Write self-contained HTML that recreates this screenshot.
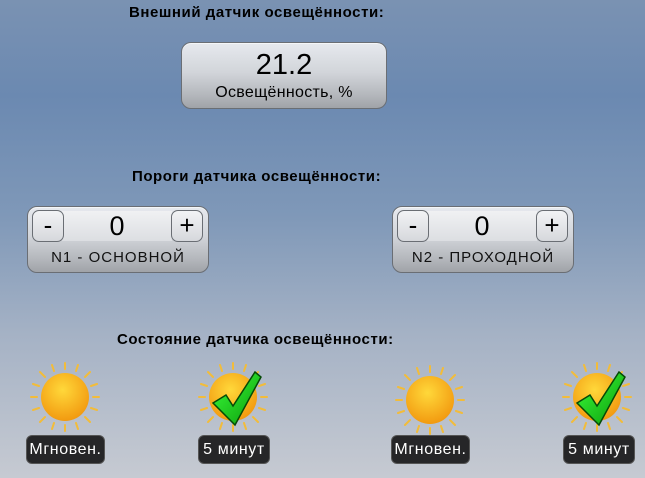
<!DOCTYPE html>
<html><head><meta charset="utf-8"><style>
*{margin:0;padding:0;box-sizing:border-box}
body{width:645px;height:478px;overflow:hidden;position:relative;font-family:"Liberation Sans",sans-serif;
background:linear-gradient(180deg,#7a92b2 0%,#6b89b1 20%,#7f98b8 45%,#a5b2c5 70%,#c6cad2 100%);}
.t{position:absolute;font-weight:bold;font-size:15px;letter-spacing:0.55px;color:#000;white-space:nowrap}
.box{position:absolute;border:1px solid #6a6e74;border-radius:10px;
background:linear-gradient(180deg,#e6e9ee 0%,#d2d5da 45%,#b4b7bc 80%,#a0a3a8 100%);box-shadow:inset 0 1px 0 #f4f6f8}
.big{position:absolute;left:0;right:0;text-align:center;white-space:nowrap}
.btn{position:absolute;top:3px;width:32px;height:32px;border:1px solid #6a6e74;border-radius:7px;
background:linear-gradient(180deg,#f2f3f5,#d6d8dc);font-size:26px;line-height:29px;text-align:center;color:#000}
.band{position:absolute;top:4px;height:30px;background:linear-gradient(180deg,#f0f1f3,#dcdee2);font-size:27px;line-height:31px;text-align:center}
.lab{position:absolute;bottom:6px;left:0;right:0;text-align:center;font-size:15px;color:#111;letter-spacing:1px;white-space:nowrap}
.pill{position:absolute;top:435px;height:29px;background:#262628;border:1px solid #555;border-radius:6px;color:#fff;font-size:16px;letter-spacing:.6px;line-height:27px;text-align:center;white-space:nowrap}
svg.s{position:absolute}
</style></head><body>
<div class="t" style="left:129px;top:4px">Внешний датчик освещённости:</div>
<div class="box" style="left:181px;top:42px;width:206px;height:67px">
 <div class="big" style="top:6px;font-size:29px">21.2</div>
 <div class="big" style="top:41px;font-size:16px;letter-spacing:.3px">Освещённость, %</div>
</div>
<div class="t" style="left:132px;top:168px">Пороги датчика освещённости:</div>
<div class="box" style="left:27px;top:206px;width:182px;height:67px">
 <div class="band" style="left:34px;width:110px">0</div>
 <div class="btn" style="left:4px">-</div>
 <div class="btn" style="left:143px">+</div>
 <div class="lab">N1 - ОСНОВНОЙ</div>
</div>
<div class="box" style="left:392px;top:206px;width:182px;height:67px">
 <div class="band" style="left:34px;width:110px">0</div>
 <div class="btn" style="left:4px">-</div>
 <div class="btn" style="left:143px">+</div>
 <div class="lab">N2 - ПРОХОДНОЙ</div>
</div>
<div class="t" style="left:117px;top:331px">Состояние датчика освещённости:</div>

<svg width="0" height="0" style="position:absolute"><defs>
<radialGradient id="g" cx="45%" cy="35%" r="65%"><stop offset="0" stop-color="#ffd83a"/><stop offset="1" stop-color="#f29a10"/></radialGradient>
<g id="sun">
 <g stroke="#f2bc3a" stroke-width="2" stroke-linecap="round" fill="none">
  <path d="M0,-28 L0,-34 M0,28 L0,34 M-28,0 L-34,0 M28,0 L34,0 M20,-20 L25,-25 M-20,-20 L-25,-25 M20,20 L25,25 M-20,20 L-25,25 M11,-26 L13,-32 M-11,-26 L-13,-32 M11,26 L13,32 M-11,26 L-13,32 M26,11 L32,13 M-26,11 L-32,13 M26,-11 L32,-13 M-26,-11 L-32,-13"/>
 </g>
 <circle r="24" fill="url(#g)"/>
</g>
<linearGradient id="ck" x1="0" y1="0" x2="1" y2="1"><stop offset="0" stop-color="#3cff3c"/><stop offset="1" stop-color="#0a9a0a"/></linearGradient>
<g id="chk"><path d="M-22,6 L-9,-2 L-2,9 L20,-25 L26,-20 L0,28 Z" fill="url(#ck)" stroke="#064a06" stroke-width="1.5"/></g>
</defs></svg>

<svg class="s" style="left:30px;top:362px" width="72" height="72"><use href="#sun" x="35" y="35"/></svg>
<svg class="s" style="left:197px;top:362px" width="72" height="72"><use href="#sun" x="36" y="35"/><use href="#chk" x="38" y="35"/></svg>
<svg class="s" style="left:394px;top:365px" width="72" height="72"><use href="#sun" x="36" y="35"/></svg>
<svg class="s" style="left:561px;top:362px" width="72" height="72"><use href="#sun" x="36" y="35"/><use href="#chk" x="38" y="35"/></svg>

<div class="pill" style="left:26px;width:79px">Мгновен.</div>
<div class="pill" style="left:198px;width:72px">5 минут</div>
<div class="pill" style="left:391px;width:79px">Мгновен.</div>
<div class="pill" style="left:563px;width:72px">5 минут</div>
</body></html>
